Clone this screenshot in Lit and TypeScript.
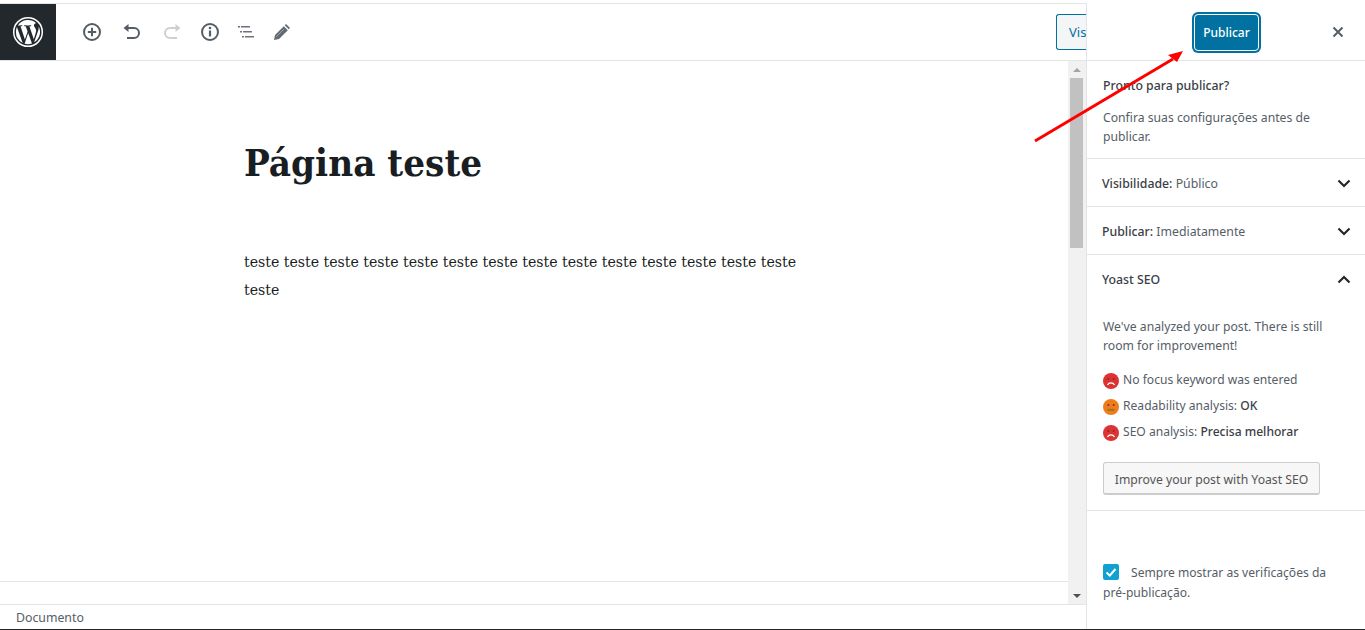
import { LitElement, html, css, svg } from "lit";
import { customElement } from "lit/decorators.js";

const chevDown = html`<svg class="chev" viewBox="0 0 14 9" width="14" height="9"><path d="M1.500 1.500 7 7l5.500-5.500" fill="none" stroke="#23282d" stroke-width="2.200"/></svg>`;
const chevUp = html`<svg class="chev" viewBox="0 0 14 9" width="14" height="9"><path d="M1.500 7.500 7 2l5.500 5.500" fill="none" stroke="#23282d" stroke-width="2.200"/></svg>`;

const face = (color: string, sad: boolean) => html`<svg class="face" viewBox="0 0 16 16" width="16" height="16">
  <circle cx="8" cy="8" r="8" fill="${color}"/>
  <circle cx="5.300" cy="6" r="1" fill="#8a2a22"/><circle cx="10.700" cy="6" r="1" fill="#8a2a22"/>
  ${sad
    ? svg`<path d="M4.500 12c1.500-2.800 5.500-2.800 7 0" fill="none" stroke="#fff" stroke-width="1.300"/>`
    : svg`<rect x="4.500" y="9.800" width="7" height="2.200" fill="#a5722e"/>`}
</svg>`;

@customElement("app-root")
export class AppRoot extends LitElement {
  static styles = css`
    :host { display: block; width: 1365px; height: 630px; overflow: hidden; position: relative; background: #fff;
      font-family: "Noto Sans", sans-serif; font-size: 13px; color: #555d66; }
    * { box-sizing: border-box; }
    .page { display: flex; height: 629px; padding-top: 3px; }
    .main { width: 1086px; flex: none; display: flex; flex-direction: column; min-width: 0; border-top: 1px solid #e2e4e7; }
    .toolbar { height: 57px; flex: none; display: flex; align-items: center; border-bottom: 1px solid #e2e4e7; }
    .wp { width: 56px; height: 56px; flex: none; background: #23282d; display: flex; align-items: center; justify-content: center; }
    .tools { display: flex; align-items: center; margin-left: 24px; height: 100%; }
    .tool { width: 24px; height: 24px; display: flex; align-items: center; justify-content: center; }
    .tool svg { display: block; }
    .m16 { margin-right: 16px; }
    .m14 { margin-right: 14px; }
    .m12 { margin-right: 12px; }
    .spacer { flex: 1; }
    .preview { width: 30px; height: 36px; overflow: hidden; border: 1px solid #0071a1; border-right: 0; border-radius: 3px 0 0 3px;
      background: #f3f5f6; color: #0071a1; font-size: 13px; line-height: 34px; padding-left: 12px; white-space: nowrap; }
    .mid { flex: 1; display: flex; min-height: 0; }
    .mid-col { flex: 1; display: flex; flex-direction: column; min-width: 0; }
    .editor { flex: 1; min-width: 0; padding: 79px 0 0 244px; }
    h1 { margin: 0; font-family: "DejaVu Serif Condensed", "DejaVu Serif", serif; font-stretch: condensed; font-weight: 700; font-size: 38.200px; line-height: 46px; color: #191e23; }
    .para { margin: 62px 0 0; width: 570px; font-family: "DejaVu Serif Condensed", "DejaVu Serif", serif; font-stretch: condensed; font-size: 15.700px; line-height: 28px; color: #191e23; }
    .meta { height: 23px; flex: none; border-top: 1px solid #e2e4e7; }
    .scroll { width: 18px; flex: none; background: #f1f1f1; display: flex; flex-direction: column; align-items: center; padding-right: 1px; }
    .arrow-up { width: 0; height: 0; margin-top: 7px; border: 4px solid transparent; border-top: 0; border-bottom: 4px solid #a3a3a3; }
    .thumb { width: 13px; height: 170px; margin-top: 6px; background: #c1c1c1; }
    .scrollfill { flex: 1; }
    .arrow-down { width: 0; height: 0; margin-bottom: 6px; border: 4px solid transparent; border-bottom: 0; border-top: 4px solid #505050; }
    .status { height: 25px; flex: none; display: flex; align-items: center; padding-left: 16px; border-top: 1px solid #e2e4e7; background: #fff; font-size: 12.300px; color: #555d66; }
    .footline { position: absolute; left: 0; right: 0; bottom: 0; height: 1px; background: #23282d; }
    .side { width: 279px; flex: none; border-left: 1px solid #e2e4e7; display: flex; flex-direction: column; background: #fff; }
    .sidehead { height: 58px; flex: none; display: flex; align-items: center; border-bottom: 1px solid #e2e4e7; padding-left: 107px; position: relative; }
    .publish { width: 65px; height: 37px; margin-top: 1px; border-radius: 4px; background: #0071a1; color: #fff; font-size: 12px; font-weight: 500; display: flex; align-items: center; justify-content: center;
      border: 1px solid #fff; box-shadow: 0 0 0 2px #0071a1; }
    .close { position: absolute; right: 21px; top: 23px; display: block; }
    .intro { padding: 15px 16px 0; height: 98px; flex: none; border-bottom: 1px solid #e2e4e7; line-height: 19px; }
    .intro strong { display: block; font-weight: 500; color: #3a4046; font-size: 12.300px; line-height: 19px; margin-bottom: 13px; }
    .intro p { margin: 0; font-size: 12.200px; }
    .row { height: 48px; flex: none; display: flex; align-items: center; justify-content: space-between; padding: 1px 14px 0 15px; border-bottom: 1px solid #e2e4e7; font-size: 12.300px; color: #555d66; }
    .row b { font-weight: 500; color: #3a4046; }
    .row .chev { display: block; }
    .yoast { height: 256px; flex: none; border-bottom: 1px solid #e2e4e7; display: flex; flex-direction: column; }
    .yoast .row { border-bottom: 0; }
    .yoast-body { padding: 14px 16px 0; font-size: 12.200px; line-height: 19px; }
    .yoast-body p { margin: 0 0 11px; }
    .check { height: 26px; display: flex; align-items: center; gap: 4px; white-space: nowrap; font-size: 12.100px; }
    .check b { font-weight: 500; color: #3a4046; }
    .face { display: block; flex: none; margin-top: 4px; }
    .imp { margin-top: 18px; width: 217px; height: 33px; padding-top: 2px; border: 1px solid #ccc; border-bottom-width: 2px; border-radius: 3px; background: #f7f7f7; color: #555; display: flex; align-items: center; justify-content: center; font-size: 12.200px; white-space: nowrap; }
    .always { padding: 52px 16px 0; font-size: 12.100px; line-height: 20px; }
    .cb { display: inline-block; vertical-align: -3px; width: 16px; height: 16px; background: #11a0d2; border-radius: 2px; margin-right: 12px; }
    .cb svg { display: block; }
    .arrow { position: absolute; left: 1030px; top: 45px; pointer-events: none; }
  `;

  render() {
    return html`
      <div class="page">
        <div class="main">
          <div class="toolbar">
            <div class="wp">
              <svg viewBox="0 0 32 32" width="32" height="32">
                <circle cx="16" cy="16" r="14.300" fill="none" stroke="#fff" stroke-width="1.500"/>
                <path fill="#fff" d="M3.900 16a12.100 12.100 0 0 0 6.800 10.900L4.900 11.100A12 12 0 0 0 3.900 16zm20.300-.6c0-1.500-.5-2.500-1-3.300-.6-1-1.200-1.800-1.200-2.800 0-1.100.8-2.100 2-2.100h.2A12.100 12.100 0 0 0 5.900 9.400h.8c1.300 0 3.200-.2 3.200-.2.600 0 .7.900 0 1 0 0-.6.100-1.400.1l4.400 13.100 2.700-8-1.900-5.100c-.6 0-1.200-.1-1.200-.1-.7 0-.6-1.100 0-1 0 0 2 .2 3.100.2 1.300 0 3.200-.2 3.200-.2.700 0 .7.900 0 1 0 0-.6.100-1.400.1l4.400 13 1.200-4c.5-1.700.9-2.900.9-3.900zm-8 1.700-3.600 10.600a12.100 12.100 0 0 0 7.400-.2l-.1-.2zm10.400-6.900.1 1.200c0 1.200-.2 2.600-.9 4.300l-3.700 10.600A12.100 12.100 0 0 0 26.600 10.200z"/>
              </svg>
            </div>
            <div class="tools">
              <div class="tool m16">
                <svg viewBox="0 0 20 20" width="20" height="20"><circle cx="10" cy="10" r="8" fill="none" stroke="#555d66" stroke-width="2"/><path d="M10 5.800v8.400M5.800 10h8.400" stroke="#555d66" stroke-width="2"/></svg>
              </div>
              <div class="tool m16">
                <svg viewBox="0 0 20 20" width="20" height="20"><path d="M6.500 2 1.500 6 6.500 10z" fill="#555d66"/><path d="M5 6h7a5 5 0 0 1 0 10H5" fill="none" stroke="#555d66" stroke-width="2"/></svg>
              </div>
              <div class="tool m14">
                <svg viewBox="0 0 20 20" width="20" height="20"><path d="M13.500 2 18.500 6 13.500 10z" fill="#ccd0d4"/><path d="M15 6H8a5 5 0 0 0 0 10h7" fill="none" stroke="#ccd0d4" stroke-width="2"/></svg>
              </div>
              <div class="tool m12">
                <svg viewBox="0 0 20 20" width="20" height="20"><circle cx="10" cy="10" r="8" fill="none" stroke="#555d66" stroke-width="2"/><path d="M10 8.500v6" stroke="#555d66" stroke-width="2.200"/><circle cx="10" cy="6" r="1.300" fill="#555d66"/></svg>
              </div>
              <div class="tool m12">
                <svg viewBox="0 0 20 20" width="20" height="20"><path d="M2 4.700h2M5 4.700h9M4 9.700h2M7 9.700h9M6 14.700h2M9 14.700h9" stroke="#6b7279" stroke-width="1.600" fill="none"/></svg>
              </div>
              <div class="tool">
                <svg viewBox="0 0 20 20" width="20" height="20"><path d="M14 2 18 6 16.700 7.300l-4-4zM11.800 4.200l4 4-8.800 8.800L2 18l1-5z" fill="#636a71"/><path d="M4.200 14.800 11.800 7.200" stroke="#aeb2b6" stroke-width=".8"/></svg>
              </div>
            </div>
            <div class="spacer"></div>
            <div class="preview">Visualizar</div>
          </div>
          <div class="mid">
            <div class="mid-col">
              <div class="editor">
                <h1>Página teste</h1>
                <p class="para">teste teste teste teste teste teste teste teste teste teste teste teste teste teste teste</p>
              </div>
              <div class="meta"></div>
            </div>
            <div class="scroll">
              <div class="arrow-up"></div><div class="thumb"></div><div class="scrollfill"></div><div class="arrow-down"></div>
            </div>
          </div>
          <div class="status">Documento</div>
        </div>
        <aside class="side">
          <div class="sidehead">
            <div class="publish">Publicar</div>
            <svg class="close" viewBox="0 0 12 12" width="12" height="12"><path d="M1.500 1.500l9 9M10.500 1.500l-9 9" stroke="#555d66" stroke-width="2"/></svg>
          </div>
          <div class="intro"><strong>Pronto para publicar?</strong><p>Confira suas configurações antes de publicar.</p></div>
          <div class="row"><span><b>Visibilidade:</b> Público</span>${chevDown}</div>
          <div class="row"><span><b>Publicar:</b> Imediatamente</span>${chevDown}</div>
          <div class="yoast">
            <div class="row"><span><b>Yoast SEO</b></span>${chevUp}</div>
            <div class="yoast-body">
              <p>We've analyzed your post. There is still room for improvement!</p>
              <div class="check">${face("#dc3232", true)}<span>No focus keyword was entered</span></div>
              <div class="check">${face("#ee7c1b", false)}<span>Readability analysis: <b>OK</b></span></div>
              <div class="check">${face("#dc3232", true)}<span>SEO analysis: <b>Precisa melhorar</b></span></div>
              <div class="imp">Improve your post with Yoast SEO</div>
            </div>
          </div>
          <div class="always"><span class="cb"><svg viewBox="0 0 16 16" width="16" height="16"><path d="M3.500 8.500 6.800 11.500 12.500 5" fill="none" stroke="#fff" stroke-width="2"/></svg></span>Sempre mostrar as verificações da pré-publicação.</div>
        </aside>
      </div>
      <div class="footline"></div>
      <svg class="arrow" width="160" height="105" viewBox="0 0 160 105">
        <path d="M5 96 L143 14" stroke="#f00" stroke-width="3" fill="none"/>
        <path d="M153 6 L138 10 L147 17 Z" fill="#f00"/>
      </svg>
    `;
  }
}
